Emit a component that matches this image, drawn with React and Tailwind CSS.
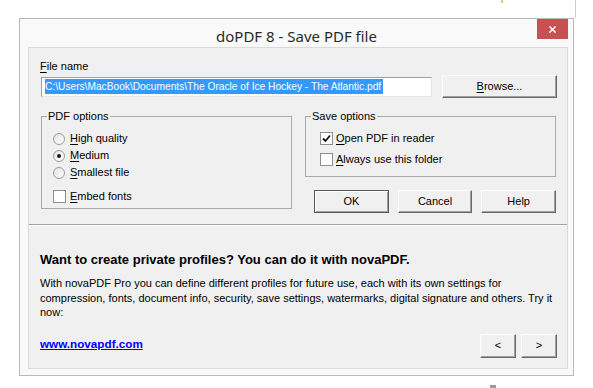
import { X } from "lucide-react";

const qualityOptions = [
  { key: "H", rest: "igh quality", checked: false },
  { key: "M", rest: "edium", checked: true },
  { key: "S", rest: "mallest file", checked: false },
];

const saveOptions = [
  { key: "O", rest: "pen PDF in reader", checked: true },
  { key: "A", rest: "lways use this folder", checked: false },
];

const dialogButtons = [
  { label: "OK", primary: true },
  { label: "Cancel" },
  { label: "Help" },
];

const Accel = ({ k, rest }) => (
  <span>
    <span className="underline underline-offset-[2px]">{k}</span>
    {rest}
  </span>
);

const Radio = ({ checked }) => (
  <span className="w-[12px] h-[12px] rounded-full border border-[#9a9a9a] bg-gradient-to-br from-[#e4e4e4] to-white flex items-center justify-center shrink-0">
    {checked && <span className="w-[4px] h-[4px] rounded-full bg-[#1a1a1a]" />}
  </span>
);

const Checkbox = ({ checked }) => (
  <span className="w-[13px] h-[13px] border border-[#8e8e8e] bg-white flex items-center justify-center shrink-0">
    {checked && (
      <svg width="9" height="9" viewBox="0 0 9 9">
        <path d="M1 4.5 L3.5 7 L8 1.5" fill="none" stroke="#111" strokeWidth="1.8" />
      </svg>
    )}
  </span>
);

const ClassicButton = ({ children, primary, className = "" }) => (
  <button
    className={
      primary
        ? `border border-[#5a5a5a] bg-[#f0f0f0] shadow-[inset_1px_1px_0_#fff,inset_-1px_-1px_0_#a0a0a0] flex items-center justify-center ${className}`
        : `border border-t-white border-l-white border-r-[#696969] border-b-[#696969] bg-[#f0f0f0] shadow-[inset_-1px_-1px_0_#a0a0a0] flex items-center justify-center ${className}`
    }
  >
    {children}
  </button>
);

const GroupBox = ({ title, children, className = "", legendClass = "" }) => (
  <fieldset className={`border border-[#a9a9a9] ${className}`}>
    <legend className={`px-[1px] leading-[13px] ${legendClass}`}>{title}</legend>
    {children}
  </fieldset>
);

export default function App() {
  return (
    <div className="relative min-h-screen bg-white pl-[19px] pt-[18px] text-[11px] text-black font-['Liberation_Sans',Arial,sans-serif]">
      {/* bits of the desktop behind the dialog */}
      <div className="absolute left-[575px] top-0 w-px h-[18px] bg-[#cfcfcf]" />
      <div className="absolute left-[501px] top-0 w-[2px] h-[3px] bg-[#d8c89a]" />
      <div className="absolute left-[490px] top-[385px] w-[6px] h-[3px] bg-[#9a9a9a]" />

      {/* WINDOW */}
      <div className="w-[555px] h-[358px] border border-[#b9b9b9] bg-[#f9f9f9] flex flex-col">
        {/* TITLE BAR */}
        <div className="relative h-[28px] flex justify-center pt-[7px]">
          <span className="text-[15px] leading-[20px] text-[#2b2b2b] font-['Noto_Sans',sans-serif]">
            doPDF 8 - Save PDF file
          </span>
          <div className="absolute right-[5px] top-0 w-[31px] h-[20px] bg-[#c75050] flex items-center justify-center">
            <X size={11} strokeWidth={3.2} color="#fff" />
          </div>
        </div>

        {/* CLIENT */}
        <div className="ml-[8px] mr-[5px] mb-[6px] flex-1 border border-[#dadada] bg-[#f0f0f0] flex flex-col">
          <div className="pl-[11px] pr-[10px] pt-[12px]">
            <div className="leading-[13px]">
              <Accel k="F" rest="ile name" />
            </div>

            <div className="mt-[2px] flex items-center">
              <div className="ml-[1px] w-[391px] h-[20px] border border-t-[#a0a0a0] border-l-[#a0a0a0] border-r-[#e3e3e3] border-b-[#e3e3e3] bg-white flex items-center pl-[3px]">
                <span className="bg-[#3399ff] text-white text-[10.2px] leading-[15px] whitespace-nowrap pr-[2px]">
                  C:\Users\MacBook\Documents\The Oracle of Ice Hockey - The Atlantic.pdf
                </span>
              </div>
              <ClassicButton className="ml-[10px] w-[115px] h-[23px]">
                <Accel k="B" rest="rowse..." />
              </ClassicButton>
            </div>

            <div className="mt-[12px] ml-[1px] grid grid-cols-[251px_251px] gap-x-[13px] items-start">
              {/* PDF OPTIONS */}
              <GroupBox title="PDF options" className="pl-[11px] pt-[7px] pb-[3px]" legendClass="-ml-[6px]">
                {qualityOptions.map((opt) => (
                  <div key={opt.key} className="h-[17px] flex items-center gap-[5px]">
                    <Radio checked={opt.checked} />
                    <Accel k={opt.key} rest={opt.rest} />
                  </div>
                ))}
                <div className="mt-[7px] h-[17px] flex items-center gap-[4px]">
                  <Checkbox />
                  <Accel k="E" rest="mbed fonts" />
                </div>
              </GroupBox>

              {/* SAVE OPTIONS + BUTTONS */}
              <div>
                <GroupBox title="Save options" className="pl-[14px] pt-[7px] pb-[8px]" legendClass="-ml-[9px]">
                  <div className="flex flex-col gap-[4px]">
                    {saveOptions.map((opt) => (
                      <div key={opt.key} className="h-[17px] flex items-center gap-[3px]">
                        <Checkbox checked={opt.checked} />
                        <Accel k={opt.key} rest={opt.rest} />
                      </div>
                    ))}
                  </div>
                </GroupBox>

                <div className="mt-[13px] ml-[9px] flex gap-[9px]">
                  {dialogButtons.map((b) => (
                    <ClassicButton key={b.label} primary={b.primary} className="w-[75px] h-[23px]">
                      {b.label}
                    </ClassicButton>
                  ))}
                </div>
              </div>
            </div>
          </div>

          {/* SEPARATOR */}
          <div className="mt-[11px] h-px bg-[#a0a0a0]" />
          <div className="h-px bg-white" />

          {/* PROMO */}
          <div className="pl-[11px] pr-[10px] pt-[26px]">
            <h2 className="text-[13px] font-bold leading-[16px]">
              Want to create private profiles? You can do it with novaPDF.
            </h2>
            <p className="mt-[8px] leading-[14.5px] whitespace-nowrap">
              With novaPDF Pro you can define different profiles for future use, each with its own settings for
              <br />
              compression, fonts, document info, security, save settings, watermarks, digital signature and others. Try it
              <br />
              now:
            </p>

            <div className="mt-[14px] flex justify-between items-start">
              <a className="pt-[1px] text-[11.7px] font-bold text-[#0000ff] underline">www.novapdf.com</a>
              <div className="flex gap-[5px]">
                <ClassicButton className="w-[36px] h-[24px]">&lt;</ClassicButton>
                <ClassicButton className="w-[36px] h-[24px]">&gt;</ClassicButton>
              </div>
            </div>
          </div>
        </div>
      </div>
    </div>
  );
}
